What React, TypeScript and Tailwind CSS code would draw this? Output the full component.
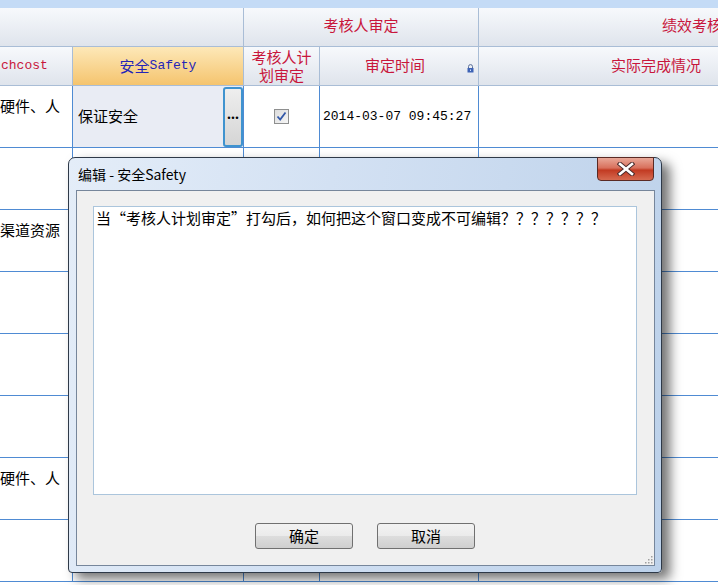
import React from 'react';

const cjk = "font-['Noto_Sans_CJK_SC',sans-serif]";
const mono = "font-['Liberation_Mono','Noto_Sans_CJK_SC',monospace]";
const hdrBg = 'bg-[linear-gradient(#f7f9fc,#dfe4ec)]';
const hdrLine = 'border-[#a9bdd6]';
const gridLine = 'border-[#4f8bd3]';

const cols = ['w-[73px]', 'w-[171px]', 'w-[76px]', 'w-[159px]', 'w-[354px]'];

const rowText = ['硬件、人', '', '渠道资源', '', '', '', '硬件、人', ''];

const Lock = () => (
  <svg width="7" height="9" viewBox="0 0 7 9" className="absolute right-[4px] top-[17px]">
    <path d="M1.5 4V2.6a2 2 0 0 1 4 0V4" fill="none" stroke="#5b6f9a" strokeWidth="1" />
    <rect x="0.5" y="4" width="6" height="4.5" fill="#3e63b5" />
    <rect x="3" y="5.5" width="1" height="1.5" fill="#cfe0ff" />
  </svg>
);

const CheckBox = () => (
  <div className="w-[15px] h-[15px] border border-[#8e8f8f] bg-[linear-gradient(135deg,#dcdcdc,#f6f6f6)] flex items-center justify-center">
    <svg width="11" height="11" viewBox="0 0 11 11">
      <path d="M1.5 5.5 L4.2 8.5 L9.5 1.5" fill="none" stroke="#3358a8" strokeWidth="1.8" />
    </svg>
  </div>
);

const DataRow: React.FC<{ text: string; first?: boolean }> = ({ text, first }) => (
  <div className={`flex h-[62px] shrink-0 border-b ${gridLine}`}>
    <div className={`${cols[0]} border-r ${gridLine} shrink-0 overflow-hidden pt-[10px] text-[15px] leading-[20px] text-black whitespace-nowrap ${cjk}`}>
      {text}
    </div>
    <div className={`${cols[1]} border-r ${gridLine} shrink-0 flex items-center ${first ? 'bg-[#e9ecf4]' : ''}`}>
      {first && (
        <>
          <span className={`flex-1 pl-[5px] text-[15px] text-black ${cjk}`}>保证安全</span>
          <div className="w-[20px] h-[60px] rounded-[3px] border-2 border-[#3f93cf] bg-[linear-gradient(#eeeeee,#d5d5d5)] flex items-center justify-center text-[14px] font-bold leading-none text-black pb-[5px]">
            ...
          </div>
        </>
      )}
    </div>
    <div className={`${cols[2]} border-r ${gridLine} shrink-0 flex items-center justify-center`}>
      {first && <CheckBox />}
    </div>
    <div className={`${cols[3]} border-r ${gridLine} shrink-0 flex items-center pl-[3px]`}>
      {first && <span className={`text-[13px] text-black ${mono}`}>2014-03-07 09:45:27</span>}
    </div>
    <div className={`${cols[4]} shrink-0`} />
  </div>
);

const Dialog = () => (
  <div className="absolute left-[68px] top-[157px] w-[594px] h-[416px] rounded-t-[7px] rounded-b-[4px] border border-[#2e3948] bg-[linear-gradient(100deg,#e4edf8_0%,#d3e1f3_40%,#bcd1ea_100%)] shadow-[8px_6px_12px_rgba(0,0,0,0.55)] flex flex-col pl-[7px] pr-[6px] pb-[6px]">
    <div className={`h-[32px] shrink-0 flex items-center pl-[2px] pt-[1px] text-[14px] text-black ${cjk}`}>
      编辑 - 安全Safety
    </div>
    <div className="absolute right-[7px] top-[-1px] w-[57px] h-[24px] rounded-b-[4px] border border-[#5a2a24] bg-[linear-gradient(#e9a898_0%,#d8705c_45%,#c23a22_55%,#d66a50_100%)] flex items-center justify-center">
      <svg width="18" height="14" viewBox="0 0 18 14">
        <path d="M3 2 L15 12 M15 2 L3 12" stroke="#4a2a2a" strokeWidth="4.5" strokeLinecap="square" />
        <path d="M3 2 L15 12 M15 2 L3 12" stroke="#ffffff" strokeWidth="2.6" strokeLinecap="square" />
      </svg>
    </div>
    <div className="relative flex-1 border border-[#76869b] bg-[#f0f0f0] flex flex-col items-start pl-[16px] pt-[15px]">
      <div className={`w-[544px] h-[289px] border border-[#abc5dc] bg-white px-[2px] pt-[1px] text-[15px] leading-[20px] text-black ${cjk}`}>
        当“考核人计划审定”打勾后，如何把这个窗口变成不可编辑？？？？？？？
      </div>
      <div className="flex gap-[24px] mt-[28px] ml-[162px]">
        {['确定', '取消'].map((t) => (
          <div
            key={t}
            className={`w-[98px] h-[26px] rounded-[3px] border border-[#707070] bg-[linear-gradient(#f2f2f2_0%,#ebebeb_50%,#dddddd_51%,#cfcfcf_100%)] flex items-center justify-center text-[15px] text-black ${cjk}`}
          >
            {t}
          </div>
        ))}
      </div>
      <svg width="8" height="8" viewBox="0 0 8 8" className="absolute right-[1px] bottom-[1px]">
        <rect x="6" y="0" width="1.5" height="1.5" fill="#a0a0a0" />
        <rect x="3" y="3" width="1.5" height="1.5" fill="#a0a0a0" />
        <rect x="6" y="3" width="1.5" height="1.5" fill="#a0a0a0" />
        <rect x="0" y="6" width="1.5" height="1.5" fill="#a0a0a0" />
        <rect x="3" y="6" width="1.5" height="1.5" fill="#a0a0a0" />
        <rect x="6" y="6" width="1.5" height="1.5" fill="#a0a0a0" />
      </svg>
    </div>
  </div>
);

export default function App() {
  return (
    <div className="relative w-[718px] h-[585px] overflow-hidden bg-white">
      <div className="flex flex-col w-[833px]">
        <div className="h-[8px] bg-[#c4dbf6] shrink-0" />
        {/* header band 1 */}
        <div className={`flex h-[39px] shrink-0 border-b ${hdrLine} ${hdrBg}`}>
          <div className={`w-[244px] shrink-0 border-r ${hdrLine}`} />
          <div className={`w-[235px] shrink-0 border-r ${hdrLine} flex items-center justify-center pb-[3px] text-[15px] text-[#c8163c] ${cjk}`}>
            考核人审定
          </div>
          <div className={`flex-1 flex items-center pl-[183px] pb-[3px] whitespace-nowrap text-[15px] text-[#c8163c] ${cjk}`}>
            绩效考核
          </div>
        </div>
        {/* header band 2 */}
        <div className={`flex h-[39px] shrink-0 border-b ${hdrLine} ${hdrBg}`}>
          <div className={`${cols[0]} shrink-0 border-r ${hdrLine} flex items-center pl-[1px] text-[13px] text-[#c8163c] ${mono}`}>
            chcost
          </div>
          <div className={`${cols[1]} shrink-0 border-r ${hdrLine} bg-[linear-gradient(#fde8b8,#f5c46e)] flex items-center justify-center text-[#2424b8]`}>
            <span className={`text-[15px] ${cjk}`}>安全</span>
            <span className={`text-[13px] ${mono}`}>Safety</span>
          </div>
          <div className={`${cols[2]} shrink-0 border-r ${hdrLine} flex flex-col items-center justify-center text-[15px] leading-[18px] text-[#c8163c] ${cjk}`}>
            <span>考核人计</span>
            <span>划审定</span>
          </div>
          <div className={`${cols[3]} relative shrink-0 border-r ${hdrLine} flex items-center justify-center pr-[8px] pb-[2px] text-[15px] text-[#c8163c] ${cjk}`}>
            审定时间
            <Lock />
          </div>
          <div className={`${cols[4]} shrink-0 flex items-center justify-center pb-[2px] text-[15px] text-[#c8163c] ${cjk}`}>
            实际完成情况
          </div>
        </div>
        {rowText.map((t, i) => (
          <DataRow key={i} text={t} first={i === 0} />
        ))}
      </div>
      <Dialog />
    </div>
  );
}
